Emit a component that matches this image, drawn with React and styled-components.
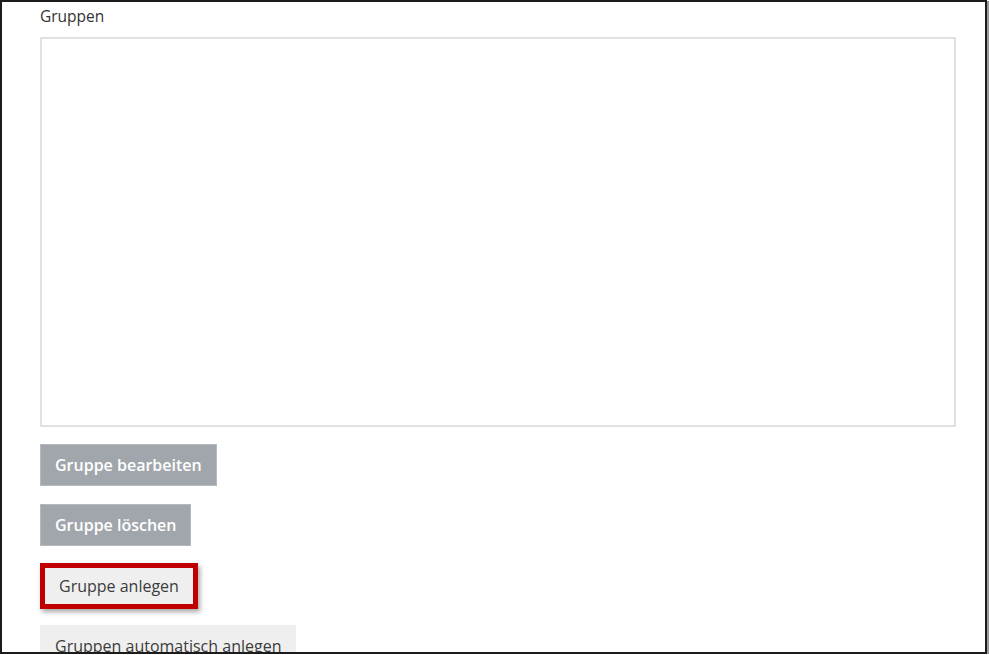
import React from 'react';
import styled, { createGlobalStyle } from 'styled-components';

const GlobalStyle = createGlobalStyle`
  html, body {
    margin: 0;
    padding: 0;
    background: #ffffff;
  }
  body {
    font-family: 'Open Sans', 'Noto Sans', sans-serif;
  }
`;

const Frame = styled.div`
  box-sizing: border-box;
  width: 987px;
  height: 654px;
  border: 2px solid #1c1c1c;
  box-shadow: 2px 1px 0 #9a9a9a;
  overflow: hidden;
  background: #ffffff;
`;

const Form = styled.div`
  display: flex;
  flex-direction: column;
  align-items: flex-start;
  padding: 4px 0 0 38px;
`;

const Label = styled.label`
  font-size: 15.5px;
  color: #333333;
  line-height: 21px;
  margin-bottom: 10px;
`;

const ListBox = styled.div`
  box-sizing: border-box;
  width: 916px;
  height: 390px;
  border: 2px solid #dfe2e5;
  background: #ffffff;
  margin-bottom: 17px;
`;

const Actions = styled.div`
  display: flex;
  flex-direction: column;
  align-items: flex-start;
  gap: 18px;
`;

const Button = styled.button`
  box-sizing: border-box;
  height: ${(p) => (p.$inset ? '36px' : '42px')};
  padding: 0 ${(p) => (p.$inset ? '13px' : '14px')};
  font-family: 'Open Sans', 'Noto Sans', sans-serif;
  font-size: 16px;
  font-weight: ${(p) => (p.$disabled ? 600 : 400)};
  color: ${(p) => (p.$disabled ? '#ffffff' : '#3c3c3c')};
  background: ${(p) => (p.$disabled ? '#a1a6ac' : '#efefef')};
  border: 1px solid ${(p) => (p.$disabled ? '#b5b9bd' : '#efefef')};
  white-space: nowrap;
  cursor: pointer;
`;

const Highlight = styled.div`
  display: flex;
  border: 5px solid #c00000;
  box-shadow: 2px 3px 5px rgba(0, 0, 0, 0.35);
  margin: -1px 0 -2px;
`;

export default function App() {
  return (
    <>
      <GlobalStyle />
      <Frame>
        <Form>
          <Label>Gruppen</Label>
          <ListBox />
          <Actions>
            <Button $disabled>Gruppe bearbeiten</Button>
            <Button $disabled>Gruppe löschen</Button>
            <Highlight>
              <Button $inset>Gruppe anlegen</Button>
            </Highlight>
            <Button>Gruppen automatisch anlegen</Button>
          </Actions>
        </Form>
      </Frame>
    </>
  );
}
